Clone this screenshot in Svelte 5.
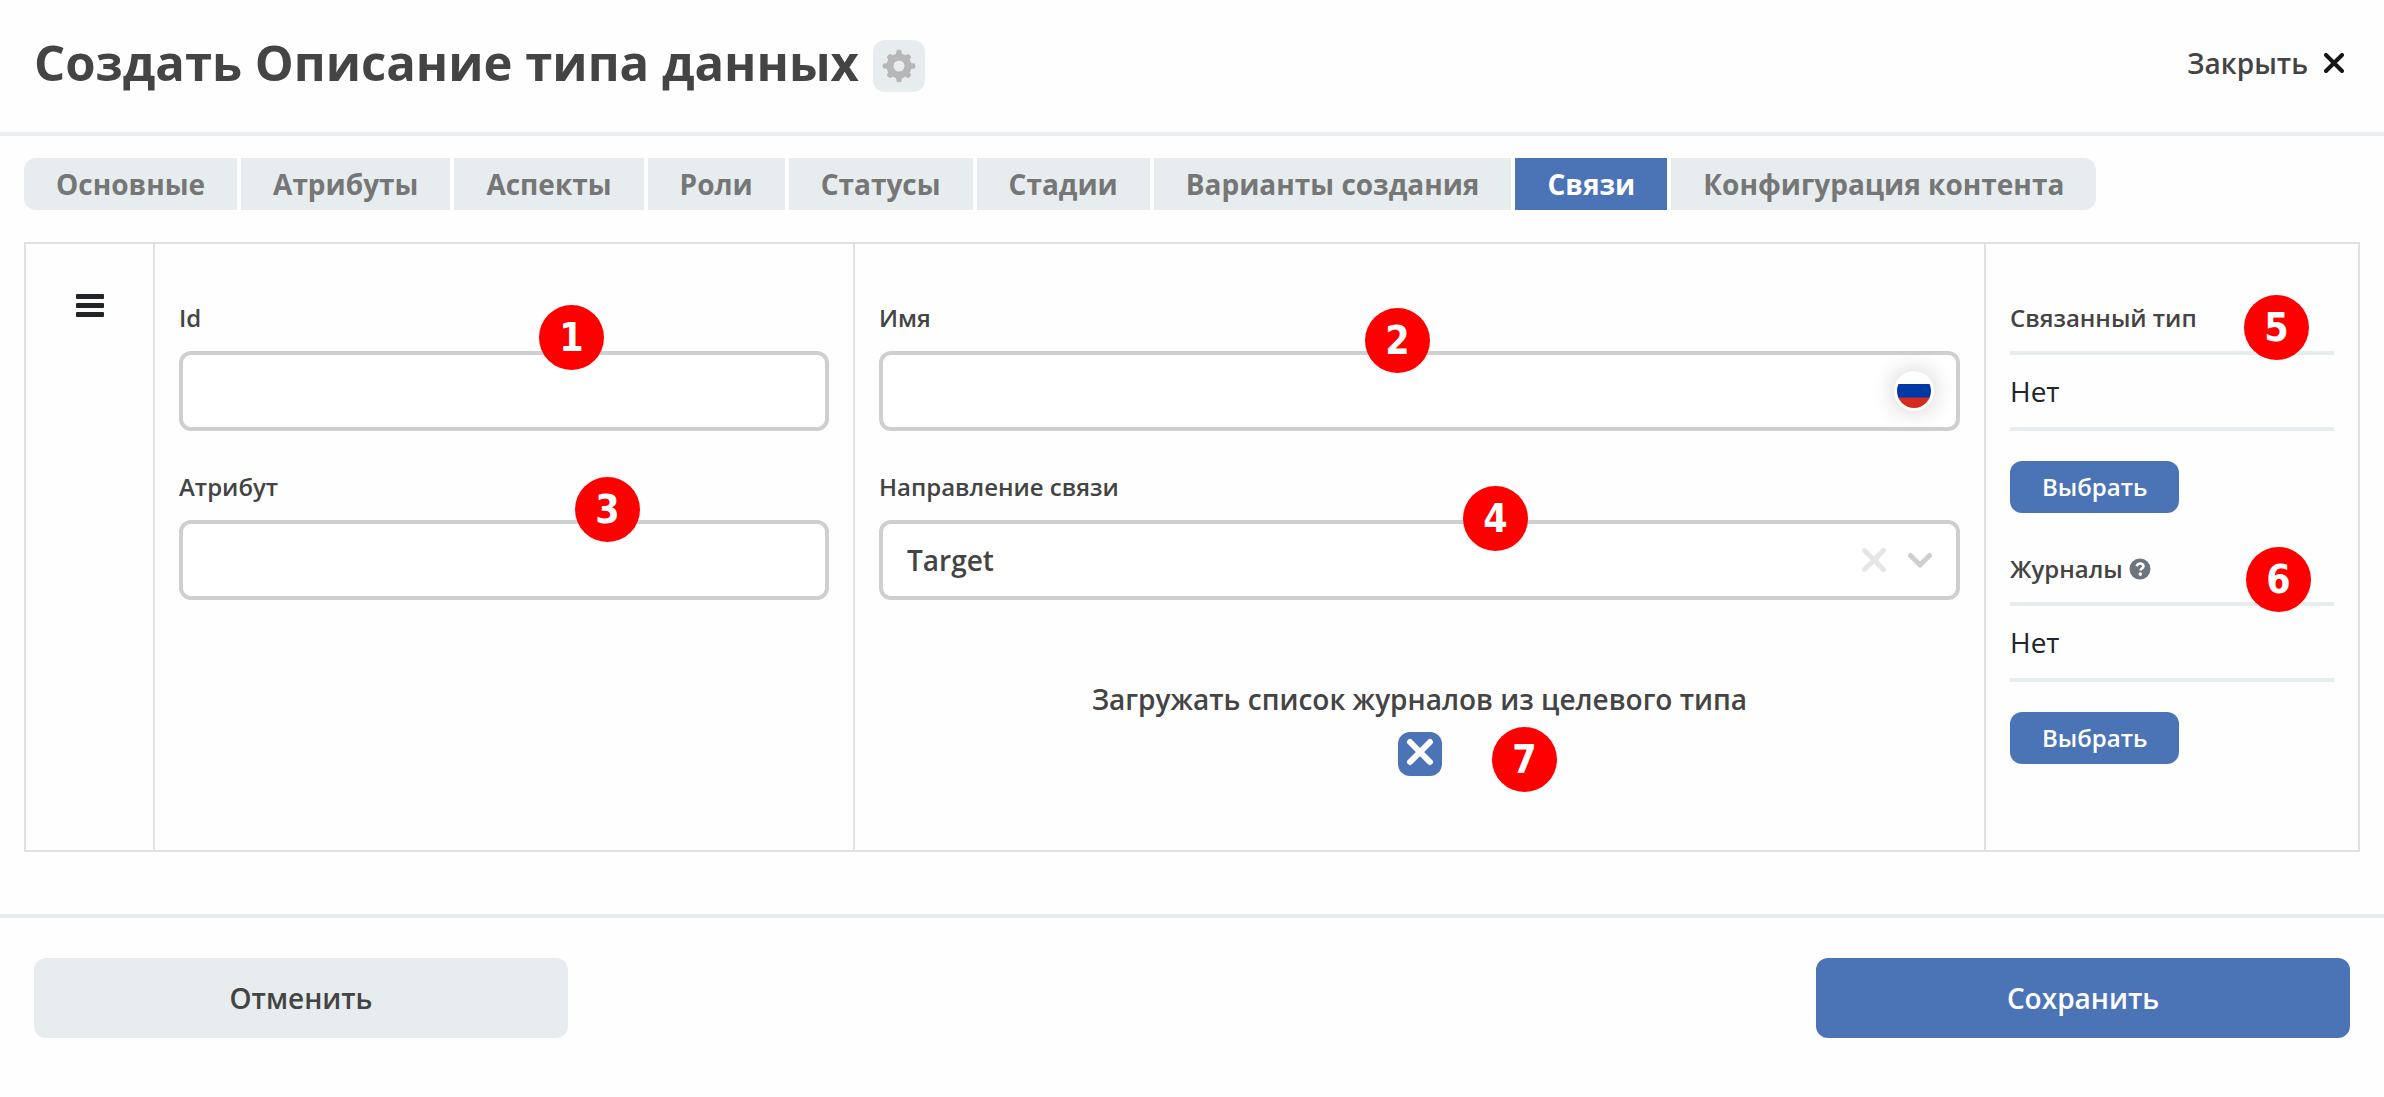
<script>
  const tabs = [
    'Основные', 'Атрибуты', 'Аспекты', 'Роли', 'Статусы', 'Стадии',
    'Варианты создания', 'Связи', 'Конфигурация контента'
  ];
  let active = $state('Связи');
  let loadJournals = $state(false);
</script>

{#snippet marker(n, place)}
  <span class="marker {place}">{n}</span>
{/snippet}

<div class="modal">
  <header class="head">
    <h1>Создать Описание типа данных</h1>
    <button class="gear" type="button" aria-label="Настройки">
      <svg viewBox="0 0 34 34" width="34" height="34" aria-hidden="true">
        <g fill="#b7b7b7">
          <path fill-rule="evenodd" d="M17 4.500a12.500 12.500 0 1 0 0 25a12.500 12.500 0 1 0 0-25zM17 11.500a5.500 5.500 0 1 1 0 11a5.500 5.500 0 1 1 0-11z" />
          {#each [0, 90, 180, 270] as a}
            <path d="M14.500 2q.2-1.300 1.500-1.300h2q1.300 0 1.500 1.300l.6 3.600h-6.200z" transform="rotate({a} 17 17)" />
            <path d="M14.400 3q.2-1.300 1.500-1.300h2.200q1.300 0 1.500 1.300l.6 3.600h-6.400z" transform="rotate({a + 45} 17 17)" />
          {/each}
        </g>
      </svg>
    </button>
    <button class="close" type="button">
      Закрыть
      <svg viewBox="0 0 20 20" width="20" height="20" aria-hidden="true">
        <path d="M2 2l16 16M18 2L2 18" stroke="#161616" stroke-width="4" stroke-linecap="round" />
      </svg>
    </button>
  </header>

  <main>
    <nav class="tabs">
      {#each tabs as tab}
        <button type="button" class:active={tab === active} onclick={() => (active = tab)}>{tab}</button>
      {/each}
    </nav>

    <section class="row">
      <div class="cell handle">
        <svg viewBox="0 0 28 24" width="28" height="24" aria-hidden="true">
          <path d="M1 0h26q1 0 1 1v3q0 1-1 1H1q-1 0-1-1V1q0-1 1-1zM1 9h26q1 0 1 1v3q0 1-1 1H1q-1 0-1-1v-3q0-1 1-1zM1 18h26q1 0 1 1v3q0 1-1 1H1q-1 0-1-1v-3q0-1 1-1z" fill="#212529" />
        </svg>
      </div>

      <div class="cell">
        <div class="field">
          <label for="id">Id</label>
          <input id="id" type="text" />
        </div>
        <div class="field">
          <label for="attr">Атрибут</label>
          <input id="attr" type="text" />
        </div>
        {@render marker(1, 'm1')}
        {@render marker(3, 'm3')}
      </div>

      <div class="cell">
        <div class="field">
          <label for="name">Имя</label>
          <div class="wrap">
            <input id="name" type="text" />
            <button class="flag" type="button" aria-label="Русский">
              <svg viewBox="0 0 34 34" width="34" height="34" aria-hidden="true">
                <clipPath id="round"><circle cx="17" cy="17" r="17" /></clipPath>
                <g clip-path="url(#round)">
                  <path d="M0 0h34v10H0z" fill="#fff" />
                  <path d="M0 10h34v14H0z" fill="#0039a6" />
                  <path d="M0 23.500h34V34H0z" fill="#d52b1e" />
                </g>
              </svg>
            </button>
          </div>
        </div>
        <div class="field">
          <label for="dir">Направление связи</label>
          <div class="wrap">
            <select id="dir">
              <option>Target</option>
              <option>Source</option>
            </select>
            <span class="indicators">
              <svg viewBox="0 0 24 24" width="24" height="24" aria-hidden="true">
                <path d="M2.500 2.500l19 19M21.500 2.500l-19 19" stroke="#e6e6e6" stroke-width="5" stroke-linecap="round" />
              </svg>
              <svg viewBox="0 0 24 24" width="24" height="24" aria-hidden="true">
                <path d="M2.500 7.500L12 17l9.500-9.500" fill="none" stroke="#cfcfcf" stroke-width="5" stroke-linecap="round" stroke-linejoin="round" />
              </svg>
            </span>
          </div>
        </div>
        <label class="check">
          Загружать список журналов из целевого типа
          <span class="box">
            <input type="checkbox" bind:checked={loadJournals} />
            <svg viewBox="0 0 44 44" width="44" height="44" aria-hidden="true">
              <path d="M12 10l20 20M32 10L12 30" stroke="#fff" stroke-width="6" stroke-linecap="round" />
            </svg>
          </span>
        </label>
        {@render marker(2, 'm2')}
        {@render marker(4, 'm4')}
        {@render marker(7, 'm7')}
      </div>

      <div class="cell">
        <div class="pick">
          <div class="caption">Связанный тип</div>
          <div class="value">Нет</div>
          <button type="button">Выбрать</button>
        </div>
        <div class="pick">
          <div class="caption">
            Журналы
            <svg viewBox="0 0 22 22" width="22" height="22" aria-hidden="true">
              <circle cx="11" cy="11" r="10.500" fill="#6c757d" />
              <path d="M7.600 8.200C8.300 6.300 9.600 5.500 11.200 5.500c1.900 0 3.300 1.100 3.300 2.800 0 2.200-3 2.300-3 4.300" fill="none" stroke="#fff" stroke-width="2.600" />
              <circle cx="11.300" cy="16.100" r="1.800" fill="#fff" />
            </svg>
          </div>
          <div class="value">Нет</div>
          <button type="button">Выбрать</button>
        </div>
        {@render marker(5, 'm5')}
        {@render marker(6, 'm6')}
      </div>
    </section>
  </main>

  <footer class="foot">
    <button class="cancel" type="button">Отменить</button>
    <button class="save" type="button">Сохранить</button>
  </footer>
</div>

<style>
  :global(body) { background: #fefefe; }
  .modal, .modal :is(button, input, select) {
    font-family: 'Open Sans', 'Noto Sans', sans-serif;
    box-sizing: border-box;
  }
  .modal { color: #444; font-size: 28px; line-height: 40px; font-weight: 600; }
  button { border: 0; margin: 0; padding: 0; cursor: pointer; font-size: 28px; line-height: 40px; }
  svg { display: block; flex: none; }

  .head {
    display: flex;
    align-items: center;
    gap: 14px;
    height: 132px;
    padding: 0 40px 0 34px;
    border-bottom: 4px solid #e7edee;
  }
  h1 { margin: 0; padding-bottom: 8px; font-size: 49px; line-height: 64px; font-weight: 700; }
  .gear {
    display: grid;
    place-items: center;
    width: 52px;
    height: 52px;
    border-radius: 12px;
    background: #e7edee;
  }
  .close {
    display: flex;
    align-items: center;
    gap: 16px;
    margin-left: auto;
    padding-bottom: 6px;
    background: none;
    color: #444;
    font-weight: 600;
  }

  main { padding: 22px 24px 62px; }
  .tabs { display: flex; gap: 4px; margin-bottom: 32px; }
  .tabs button {
    height: 52px;
    padding: 0 32px;
    background: #e7edee;
    color: #767676;
    font-weight: 700;
    white-space: nowrap;
  }
  .tabs button:first-child { border-radius: 12px 0 0 12px; }
  .tabs button:last-child { border-radius: 0 12px 12px 0; }
  .tabs button.active { background: #4b74b7; color: #fff; }

  .row {
    display: grid;
    grid-template-columns: 129fr 700fr 1131fr 374fr;
    border: 2px solid #dee2e6;
    border-left-width: 0;
  }
  .cell {
    position: relative;
    min-width: 0;
    padding: 50px 24px 74px;
    border-left: 2px solid #dee2e6;
  }
  .handle { display: flex; justify-content: center; }
  .field { margin-bottom: 32px; }
  .field label, .caption {
    display: flex;
    align-items: center;
    box-sizing: border-box;
    height: 57px;
    padding-bottom: 10px;
    font-size: 24px;
    line-height: 40px;
  }
  .field input, .field select {
    display: block;
    width: 100%;
    height: 80px;
    padding: 0 24px;
    border: 4px solid #cfcfcf;
    border-radius: 12px;
    background: #fff;
    color: #444;
    font-size: 28px;
    font-weight: 600;
    appearance: none;
  }
  .wrap { display: grid; align-items: center; }
  .wrap > * { grid-area: 1 / 1; }
  .flag {
    justify-self: end;
    display: grid;
    place-items: center;
    width: 40px;
    height: 40px;
    margin-right: 26px;
    border-radius: 50%;
    background: #fff;
    box-shadow: 0 0 24px rgba(0, 0, 0, 0.2);
  }
  .indicators { justify-self: end; display: flex; gap: 22px; margin-right: 28px; pointer-events: none; }

  .check { display: flex; flex-direction: column; align-items: center; gap: 13px; padding-top: 47px; }
  .box { display: grid; }
  .box > * { grid-area: 1 / 1; }
  .box input { width: 44px; height: 44px; margin: 0; border-radius: 12px; background: #4b74b7; appearance: none; }
  .box svg { pointer-events: none; }

  .pick + .pick { margin-top: 32px; }
  .caption { height: 61px; gap: 6px; border-bottom: 4px solid #e7edee; }
  .value {
    height: 72px;
    margin-bottom: 30px;
    border-bottom: 4px solid #e7edee;
    color: #212529;
    font-weight: 400;
    line-height: 72px;
  }
  .pick button {
    height: 52px;
    padding: 0 32px;
    border-radius: 12px;
    background: #4b74b7;
    color: #fff;
    font-size: 24px;
    font-weight: 600;
  }

  .foot {
    display: flex;
    justify-content: space-between;
    padding: 40px 34px;
    border-top: 4px solid #e7edee;
  }
  .foot button { width: 534px; height: 80px; border-radius: 12px; font-weight: 600; }
  .cancel { background: #e7edee; color: #444; }
  .save { background: #4b74b7; color: #fff; }

  .marker {
    position: absolute;
    width: 65px;
    height: 65px;
    border-radius: 50%;
    background: #f00;
    color: #fff;
    font: 700 39px/65px 'DejaVu Sans Condensed', 'DejaVu Sans', sans-serif;
    text-align: center;
  }
  .m1 { left: 384px; top: 61px; }
  .m2 { left: 510px; top: 64px; }
  .m3 { left: 420px; top: 233px; }
  .m4 { left: 608px; top: 242px; }
  .m5 { right: 49px; top: 51px; }
  .m6 { right: 47px; top: 303px; }
  .m7 { left: 637px; top: 483px; }
</style>
